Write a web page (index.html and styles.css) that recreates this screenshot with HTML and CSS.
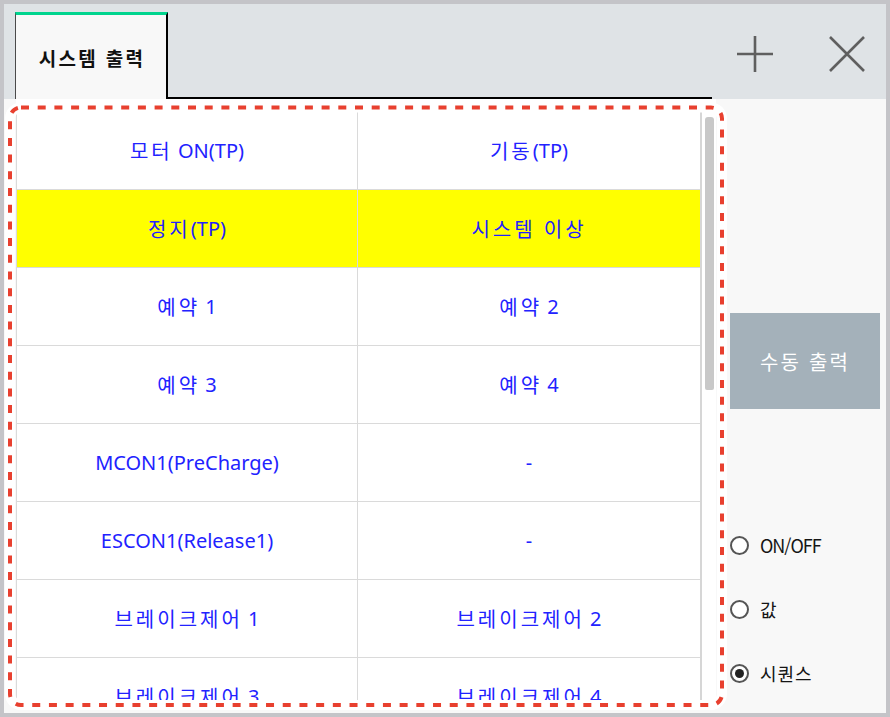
FILE: index.html
```html
<!DOCTYPE html>
<html lang="ko">
<head>
<meta charset="utf-8">
<title>시스템 출력</title>
<link rel="stylesheet" href="styles.css">
</head>
<body>
<div class="window">
  <div class="header">
    <div class="tab">시스템 출력</div>
    <div class="tab-line"></div>
    <div class="tools">
      <svg class="tool-icon" viewBox="0 0 36 36" width="36" height="36"><path d="M18 0V36M0 18H36" stroke="#5f5f5f" stroke-width="2.6" fill="none"/></svg>
      <svg class="tool-icon close" viewBox="0 0 36 36" width="36" height="36"><path d="M1 1L35 35M35 1L1 35" stroke="#5f5f5f" stroke-width="2.6" fill="none"/></svg>
    </div>
  </div>
  <div class="main">
    <div class="grid-panel">
      <div class="table">
        <div class="row"><div class="cell"><span class="ko">모터</span>&nbsp;ON(TP)</div><div class="cell"><span class="ko">기동</span>(TP)</div></div>
        <div class="row hl"><div class="cell"><span class="ko">정지</span>(TP)</div><div class="cell"><span class="ko">시스템 이상</span></div></div>
        <div class="row"><div class="cell"><span class="ko">예약</span>&nbsp;1</div><div class="cell"><span class="ko">예약</span>&nbsp;2</div></div>
        <div class="row"><div class="cell"><span class="ko">예약</span>&nbsp;3</div><div class="cell"><span class="ko">예약</span>&nbsp;4</div></div>
        <div class="row"><div class="cell">MCON1(PreCharge)</div><div class="cell">-</div></div>
        <div class="row"><div class="cell">ESCON1(Release1)</div><div class="cell">-</div></div>
        <div class="row"><div class="cell"><span class="ko">브레이크제어</span>&nbsp;1</div><div class="cell"><span class="ko">브레이크제어</span>&nbsp;2</div></div>
        <div class="row"><div class="cell"><span class="ko">브레이크제어</span>&nbsp;3</div><div class="cell"><span class="ko">브레이크제어</span>&nbsp;4</div></div>
      </div>
      <div class="scroll"><div class="thumb"></div></div>
    </div>
    <div class="side">
      <div class="btn">수동 출력</div>
      <div class="radios">
        <div class="radio"><span class="dot"></span><span class="label latin">ON/OFF</span></div>
        <div class="radio"><span class="dot"></span><span class="label">값</span></div>
        <div class="radio"><span class="dot on"></span><span class="label">시퀀스</span></div>
      </div>
    </div>
  </div>
  <svg class="highlight" width="890" height="717" viewBox="0 0 890 717">
    <rect x="10" y="107.5" width="712" height="597.5" rx="11" fill="none" stroke="#ffffff" stroke-width="10"/>
    <rect x="10" y="107.5" width="712" height="597.5" rx="11" fill="none" stroke="#e8402f" stroke-width="4" stroke-dasharray="8 8.7"/>
  </svg>
</div>
</body>
</html>
```
FILE: styles.css
```css
html, body {
  margin: 0;
  padding: 0;
}
body {
  font-family: "Noto Sans", "Noto Sans CJK KR", sans-serif;
  background: #c4c4c8;
}
.window {
  position: relative;
  width: 890px;
  height: 717px;
  box-sizing: border-box;
  border: 4px solid #c4c4c8;
  display: flex;
  flex-direction: column;
  overflow: hidden;
}
.header {
  height: 95px;
  flex: none;
  background: #dfe3e6;
  display: flex;
  align-items: flex-end;
}
.tab {
  margin-left: 11px;
  width: 150px;
  height: 84px;
  background: #f8f8f8;
  border-top: 3px solid #00d48e;
  border-left: 1px solid #4a4a4a;
  border-right: 2px solid #000;
  display: flex;
  align-items: center;
  justify-content: center;
  font-family: "Noto Sans CJK KR", sans-serif;
  font-weight: 700;
  font-size: 19px;
  color: #111;
  letter-spacing: 2.3px;
  padding-left: 2px;
  box-sizing: content-box;
  width: 148px;
}
.tab-line {
  width: 544px;
  height: 2px;
  background: #000;
}
.tools {
  flex: 1;
  align-self: stretch;
  display: flex;
  align-items: flex-start;
  padding-top: 32px;
  padding-left: 25px;
  gap: 56px;
}
.tool-icon {
  display: block;
}
.main {
  flex: 1;
  display: flex;
  background: #f8f8f8;
  min-height: 0;
}
.grid-panel {
  margin-left: 12px;
  width: 700px;
  margin-bottom: 6px;
  background: #fff;
  padding-top: 13px;
  display: flex;
  overflow: hidden;
}
.table {
  width: 683px;
  border-left: 1px solid #dadada;
  border-right: 2px solid #d6d6d6;
}
.row {
  display: grid;
  grid-template-columns: 341px 342px;
  height: 78px;
  box-sizing: border-box;
  border-bottom: 1px solid #dadada;
}
.cell {
  display: flex;
  align-items: center;
  justify-content: center;
  font-size: 20px;
  color: #2222ff;
  white-space: nowrap;
}
.ko {
  letter-spacing: 3px;
}
.cell:first-child {
  border-right: 1px solid #dadada;
}
.row.hl .cell {
  background: #ffff00;
}
.scroll {
  width: 14px;
  padding-left: 3px;
  box-sizing: border-box;
}
.thumb {
  margin-top: 5px;
  width: 9px;
  height: 273px;
  background: #c8c8c8;
  border-radius: 3px 3px 2px 2px;
}
.side {
  flex: 1;
  padding-left: 14px;
  display: flex;
  flex-direction: column;
}
.btn {
  margin-top: 214px;
  width: 150px;
  height: 96px;
  background: #a4b1ba;
  color: #fff;
  font-family: "Noto Sans CJK KR", sans-serif;
  font-size: 20px;
  display: flex;
  align-items: center;
  justify-content: center;
  letter-spacing: 2.2px;
}
.radios {
  margin-top: 124px;
  display: flex;
  flex-direction: column;
  gap: 40px;
}
.radio {
  height: 24px;
  display: flex;
  align-items: center;
  gap: 11px;
}
.dot {
  width: 19px;
  height: 19px;
  box-sizing: border-box;
  border: 2px solid #555;
  border-radius: 50%;
  background: #fff;
  display: flex;
  align-items: center;
  justify-content: center;
}
.dot.on::after {
  content: "";
  width: 9px;
  height: 9px;
  border-radius: 50%;
  background: #222;
}
.label {
  font-family: "Noto Sans CJK KR", sans-serif;
  font-size: 18px;
  color: #151515;
  letter-spacing: 1px;
}
.label.latin {
  letter-spacing: -1px;
  font-size: 18px;
}
.highlight {
  position: absolute;
  left: -4px;
  top: -4px;
  pointer-events: none;
}
```
